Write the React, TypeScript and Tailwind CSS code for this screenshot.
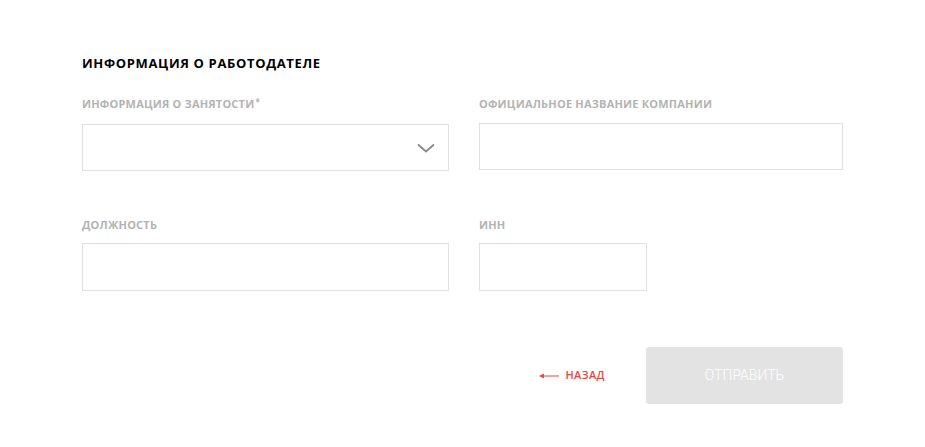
export default function App() {
  return (
    <div className="min-h-screen bg-white" style={{ fontFamily: '"Open Sans", "DejaVu Sans", sans-serif' }}>
      <div className="pl-[82px] pt-[54px] w-[761px] box-content">
        <h2 className="text-[13px] font-bold text-black tracking-[0.65px] leading-[18px]">
          ИНФОРМАЦИЯ О РАБОТОДАТЕЛЕ
        </h2>

        <div className="mt-[24px] grid grid-cols-[367px_364px] gap-x-[30px]">
          <div>
            <label className="block text-[11px] font-bold text-[#b3b3b3] leading-[15px] tracking-[0.2px]">
              ИНФОРМАЦИЯ О ЗАНЯТОСТИ<span className="relative -top-[3px] text-[8px] ml-[1px]">*</span>
            </label>
            <div className="mt-[12px] h-[47px] border border-[#e1e1e1] flex items-center justify-end pr-[13px]">
              <svg width="18" height="10" viewBox="0 0 18 10" fill="none">
                <path d="M1 1.5 L9 8.5 L17 1.5" stroke="#8a8a8a" strokeWidth="1.8" />
              </svg>
            </div>
          </div>
          <div>
            <label className="block text-[11px] font-bold text-[#b3b3b3] leading-[15px] tracking-[0.2px]">
              ОФИЦИАЛЬНОЕ НАЗВАНИЕ КОМПАНИИ
            </label>
            <input className="mt-[12px] w-full h-[47px] border border-[#e1e1e1] outline-none" />
          </div>

          <div className="mt-[46px]">
            <label className="block text-[11px] font-bold text-[#b3b3b3] leading-[15px] tracking-[0.2px]">
              ДОЛЖНОСТЬ
            </label>
            <input className="mt-[11px] w-full h-[48px] border border-[#e1e1e1] outline-none" />
          </div>
          <div className="mt-[46px]">
            <label className="block text-[11px] font-bold text-[#b3b3b3] leading-[15px] tracking-[0.2px]">
              ИНН
            </label>
            <input className="mt-[11px] w-[168px] h-[48px] border border-[#e1e1e1] outline-none" />
          </div>
        </div>

        <div className="mt-[56px] flex items-center justify-end">
          <button className="flex items-center gap-[6px] text-[#e8473f] text-[11px] font-semibold tracking-[0.4px] mr-[41px]">
            <svg width="20" height="6" viewBox="0 0 20 6">
              <path d="M0 3 L5 0.5 L5 5.5 Z" fill="#e8473f" />
              <path d="M4 3 H20" stroke="#e8473f" strokeWidth="1" />
            </svg>
            НАЗАД
          </button>
          <button
            className="w-[197px] h-[57px] bg-[#e3e3e3] rounded-[3px] text-white text-[14px] font-light"
            style={{ fontFamily: 'Roboto, sans-serif' }}
          >
            ОТПРАВИТЬ
          </button>
        </div>
      </div>
    </div>
  );
}
